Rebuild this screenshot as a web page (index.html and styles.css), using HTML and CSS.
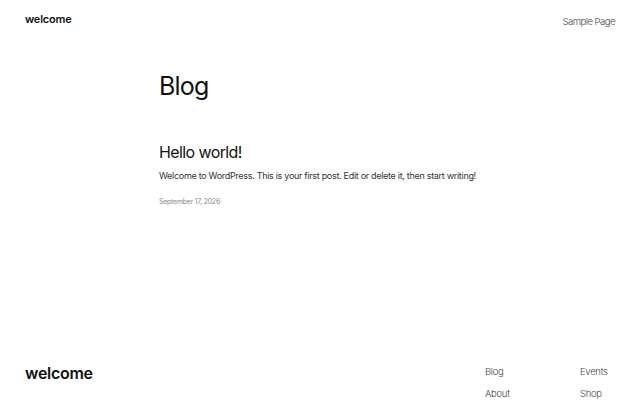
FILE: index.html
```html
<!DOCTYPE html>
<html lang="en">
<head>
<meta charset="utf-8">
<title>Blog – welcome</title>
<link rel="stylesheet" href="styles.css">
</head>
<body>
<header class="site-header">
  <a class="site-title" href="#">welcome</a>
  <nav class="header-nav"><a href="#">Sample Page</a></nav>
</header>
<main class="content">
  <h1 class="page-title">Blog</h1>
  <article class="post">
    <h2 class="post-title">Hello world!</h2>
    <p class="post-excerpt">Welcome to WordPress. This is your first post. Edit or delete it, then start writing!</p>
    <p class="post-date">September 17, 2026</p>
  </article>
</main>
<footer class="site-footer">
  <a class="footer-title" href="#">welcome</a>
  <nav class="footer-nav">
    <ul class="footer-col footer-col-first">
      <li><a href="#">Blog</a></li>
      <li><a href="#">About</a></li>
    </ul>
    <ul class="footer-col footer-col-last">
      <li><a href="#">Events</a></li>
      <li><a href="#">Shop</a></li>
    </ul>
  </nav>
</footer>
</body>
</html>
```
FILE: styles.css
```css
* { box-sizing: border-box; }
html, body { margin: 0; padding: 0; }
body {
  width: 640px;
  height: 400px;
  background: #fff;
  color: #111;
  font-family: Inter, "Liberation Sans", sans-serif;
  display: flex;
  flex-direction: column;
  overflow: hidden;
}
a { color: inherit; text-decoration: none; }

.site-header {
  display: flex;
  justify-content: space-between;
  align-items: center;
  padding: 11px 25px 0 25px;
  height: 26px;
  flex: none;
}
.site-title {
  font-size: 11px;
  font-weight: 600;
  letter-spacing: -0.2px;
}
.header-nav a {
  font-size: 9.5px;
  color: #444;
  font-weight: 300;
  letter-spacing: -0.5px;
}

.content {
  padding: 0 0 0 159px;
  flex: 1;
  min-height: 0;
}
.page-title {
  margin: 45px 0 0 0;
  font-size: 25px;
  font-weight: 400;
  line-height: 30px;
  letter-spacing: -0.8px;
}
.post { margin-top: 41px; }
.post-title {
  margin: 0;
  font-size: 16px;
  font-weight: 400;
  line-height: 20px;
  letter-spacing: -0.6px;
}
.post-excerpt {
  margin: 8px 0 0 0;
  font-size: 9px;
  line-height: 12px;
  color: #333;
  letter-spacing: -0.3px;
}
.post-date {
  margin: 16px 0 0 0;
  font-size: 7px;
  line-height: 8px;
  color: #888;
  letter-spacing: -0.25px;
}

.site-footer {
  display: flex;
  justify-content: space-between;
  align-items: flex-start;
  padding: 0 25px;
  height: 48px;
  flex: none;
}
.footer-title {
  margin-top: 12px;
  font-size: 16px;
  line-height: 19px;
  font-weight: 600;
  letter-spacing: -0.3px;
}
.footer-nav {
  display: flex;
  margin-top: 14px;
}
.footer-col {
  list-style: none;
  margin: 0;
  padding: 0;
  display: flex;
  flex-direction: column;
  gap: 10px;
  font-size: 9.5px;
  line-height: 12px;
}
.footer-col-first { width: 95px; }
.footer-col-last { width: 35px; }
.footer-col a {
  color: #444;
  font-weight: 300;
  letter-spacing: -0.3px;
}
```
